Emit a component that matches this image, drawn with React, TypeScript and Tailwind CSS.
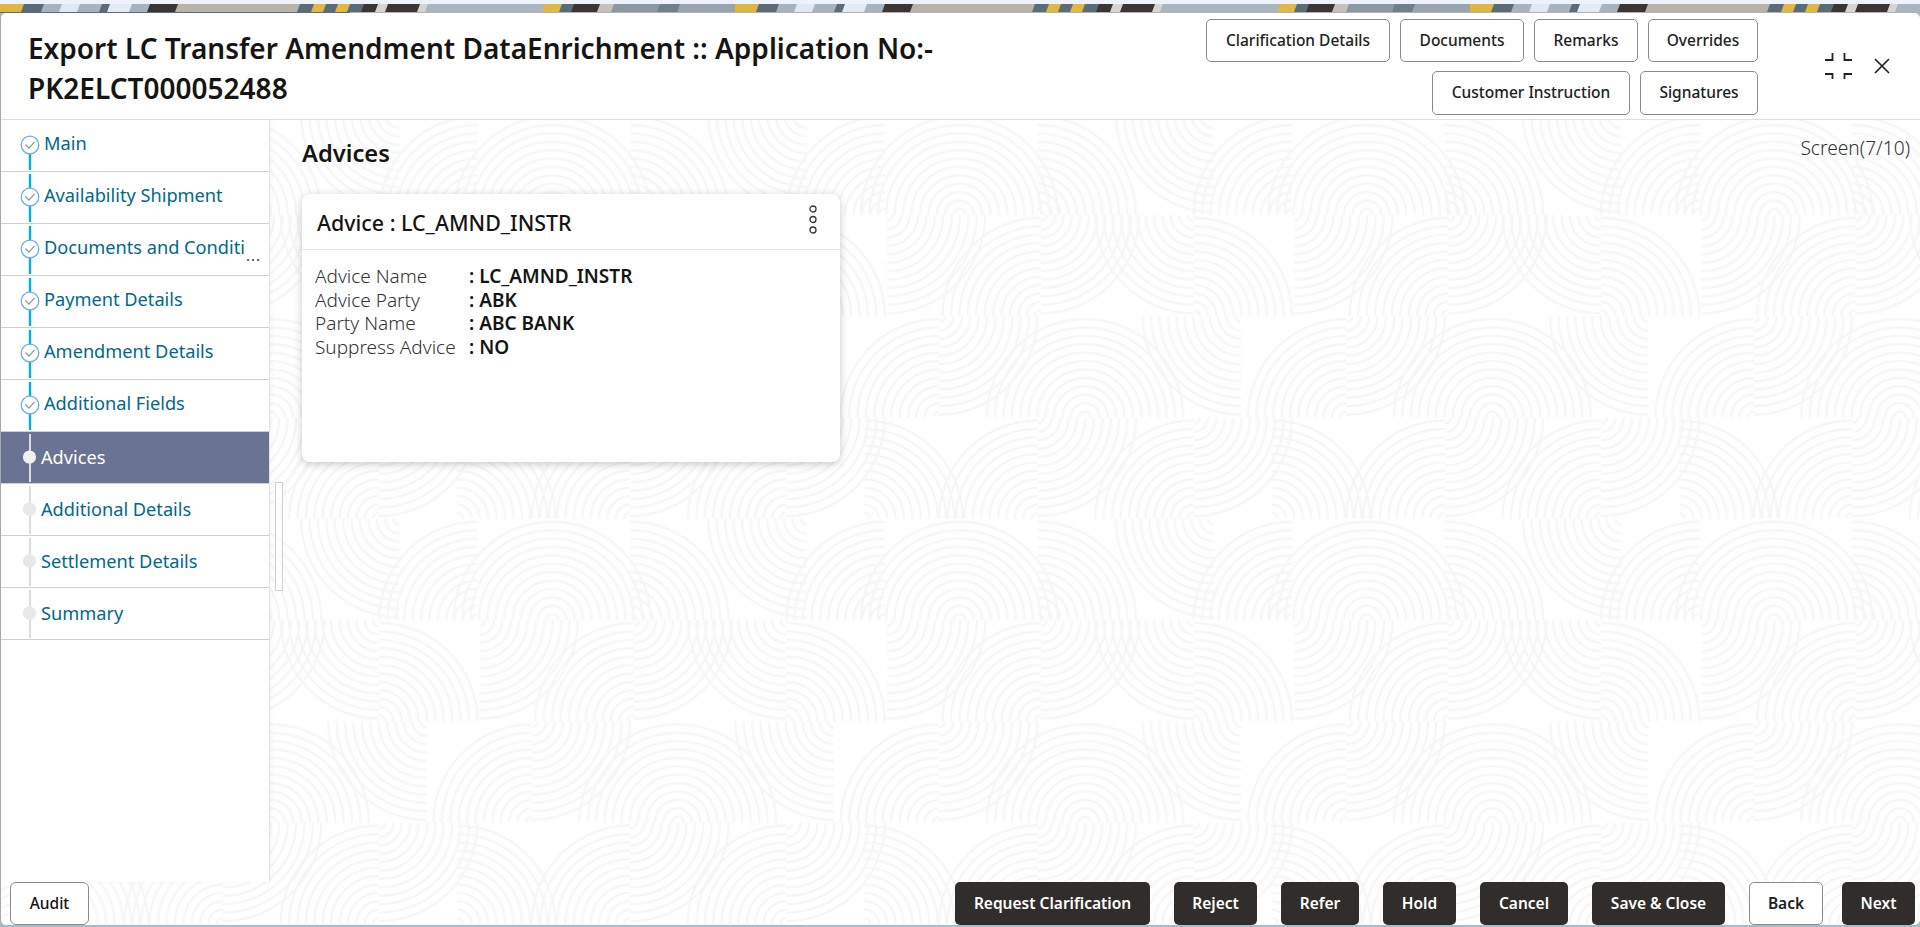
const fontClass = "font-['Noto_Sans','Open_Sans',sans-serif]";

const Z = 1.473;
const TILE_W = 407.3;
const ROW_H = 101.3;

type Quarter = { cx: number; top: boolean; right: boolean };

// four rows of quarter-circle fans, x values read off the reference
const rows: Quarter[][] = [
  [
    { cx: 145, top: false, right: false },
    { cx: 145, top: false, right: true },
    { cx: 260, top: false, right: true },
    { cx: 520, top: true, right: false },
    { cx: 635, top: false, right: false },
  ],
  [
    { cx: 38, top: true, right: true },
    { cx: 265, top: false, right: false },
    { cx: 265, top: true, right: true },
    { cx: 490, top: true, right: false },
    { cx: 490, top: false, right: true },
  ],
  [
    { cx: 115, top: false, right: false },
    { cx: 115, top: true, right: true },
    { cx: 330, top: false, right: false },
    { cx: 330, top: false, right: true },
    { cx: 560, top: true, right: false },
  ],
  [
    { cx: 5, top: false, right: true },
    { cx: 260, top: false, right: false },
    { cx: 260, top: true, right: true },
    { cx: 490, top: false, right: false },
    { cx: 490, top: true, right: true },
  ],
];

const radii = Array.from({ length: 12 }, (_, i) => 6 + i * 8.4);

function quarterPaths(q: Quarter, rowIndex: number) {
  const x = q.cx / Z;
  const y = rowIndex * ROW_H + (q.top ? 0 : ROW_H);
  const dx = q.right ? 1 : -1;
  const dy = q.top ? 1 : -1;
  return radii.map((r) => {
    const sweep = dx * dy > 0 ? 1 : 0;
    return `M${x + dx * r} ${y}A${r} ${r} 0 0 ${sweep} ${x} ${y + dy * r}`;
  });
}

const allPaths = rows.flatMap((row, i) =>
  row.flatMap((q) =>
    [0, -TILE_W, TILE_W].flatMap((shift) =>
      quarterPaths({ ...q, cx: q.cx + shift * Z }, i),
    ),
  ),
);

function FingerprintBackground() {
  return (
    <svg className="absolute inset-0 h-full w-full" aria-hidden="true">
      <defs>
        <pattern
          id="prints"
          width={TILE_W}
          height={ROW_H * 4}
          patternUnits="userSpaceOnUse"
          patternTransform="translate(860 -6.4)"
        >
          <path d={allPaths.join("")} fill="none" stroke="#f6f6f6" strokeWidth="2.2" />
        </pattern>
      </defs>
      <rect width="100%" height="100%" fill="url(#prints)" />
    </svg>
  );
}

const bandBlocks: [number, number, string][] = [
  [0, 24, "#dfb740"],
  [24, 44, "#5a6c78"],
  [44, 62, "#a9b3bd"],
  [62, 80, "#dfe8f4"],
  [80, 102, "#a9b3bd"],
  [102, 110, "#5a6c78"],
  [110, 132, "#e3ebf5"],
  [132, 150, "#a9b3bd"],
  [150, 178, "#3b3633"],
  [178, 300, "#b9b3ab"],
  [300, 314, "#5a6c78"],
  [314, 326, "#e0b844"],
  [326, 338, "#5a6c78"],
  [338, 350, "#e0b844"],
  [350, 364, "#5a6c78"],
  [364, 378, "#3b3633"],
  [378, 388, "#d8d4cf"],
  [388, 420, "#3b3633"],
  [420, 428, "#d8d4cf"],
  [428, 545, "#a9b5c1"],
  [545, 562, "#e0b844"],
  [562, 574, "#5a6c78"],
  [574, 600, "#3b3633"],
  [600, 614, "#c6c1b9"],
  [614, 660, "#8a98a4"],
  [660, 680, "#6f7f8b"],
  [680, 735, "#98a5b0"],
];

function TopBand() {
  return (
    <svg className="block h-[8px] w-full" aria-hidden="true">
      <defs>
        <pattern id="band" width="735" height="8" patternUnits="userSpaceOnUse">
          {bandBlocks.map(([a, b, c]) => (
            <polygon key={a} points={`${a},0 ${b + 3},0 ${b},8 ${a - 3},8`} fill={c} />
          ))}
        </pattern>
      </defs>
      <rect width="100%" height="8" fill="url(#band)" />
    </svg>
  );
}

function OutlineButton({ label, width, height }: { label: string; width: string; height: string }) {
  return (
    <button
      className={`${width} ${height} rounded-[5px] border border-[#8a8a88] bg-white text-[15.5px] font-medium text-[#222]`}
    >
      {label}
    </button>
  );
}

function DarkButton({ label, width }: { label: string; width: string }) {
  return (
    <button
      className={`${width} h-[43px] rounded-[5px] bg-[#312d2a] text-[15.5px] font-semibold text-white`}
    >
      {label}
    </button>
  );
}

type StepState = "done" | "active" | "pending";

const steps: { label: string; state: StepState; overflow?: boolean }[] = [
  { label: "Main", state: "done" },
  { label: "Availability Shipment", state: "done" },
  { label: "Documents and Conditi", state: "done", overflow: true },
  { label: "Payment Details", state: "done" },
  { label: "Amendment Details", state: "done" },
  { label: "Additional Fields", state: "done" },
  { label: "Advices", state: "active" },
  { label: "Additional Details", state: "pending" },
  { label: "Settlement Details", state: "pending" },
  { label: "Summary", state: "pending" },
];

function StepMarker({ state, first }: { state: StepState; first: boolean }) {
  if (state === "done") {
    return (
      <svg width="20" height="52" viewBox="0 0 20 52" className="shrink-0">
        {!first && <line x1="10" y1="2" x2="10" y2="18" stroke="#00aee6" strokeWidth="2.4" />}
        <line x1="10" y1="34" x2="10" y2="50" stroke="#00aee6" strokeWidth="2.4" />
        <circle cx="10" cy="25" r="8.8" fill="white" stroke="#6aaeea" strokeWidth="1.3" />
        <path d="M5.5 24.5l3.4 3.6 5.8-6.2" fill="none" stroke="#7d99ab" strokeWidth="1.2" />
      </svg>
    );
  }
  return (
    <svg width="20" height="52" viewBox="0 0 20 52" className="shrink-0">
      <line x1="10" y1="2" x2="10" y2="50" stroke="#dcdcdc" strokeWidth="2" />
      <circle cx="9.5" cy="25" r="6.6" fill={state === "active" ? "#f0f0f0" : "#e8e8e8"} />
    </svg>
  );
}

function SideNav() {
  return (
    <nav className="w-[269px] shrink-0 border-r border-[#e4e4e4] bg-white shadow-[2px_0_4px_rgba(0,0,0,0.03)]">
      {steps.map((step, i) => {
        const done = step.state === "done";
        const active = step.state === "active";
        return (
          <div
            key={step.label}
            className={`flex h-[52px] items-start border-b border-[#cfcfcf] pl-[19px] text-[18.2px] ${
              active ? "bg-[#6b7394] text-white" : "text-[#00688c]"
            }`}
          >
            <StepMarker state={step.state} first={i === 0} />
            <span
              className={`whitespace-nowrap leading-[24px] ${
                done ? "ml-[4px] mt-[11px]" : "ml-[1px] mt-[13px]"
              }`}
            >
              {step.label}
            </span>
            {step.overflow && (
              <span className="ml-[1px] mt-[19px] text-[15px] leading-[24px] tracking-[1px] text-[#333]">
                ...
              </span>
            )}
          </div>
        );
      })}
    </nav>
  );
}

const adviceRows = [
  { label: "Advice Name", value: ": LC_AMND_INSTR" },
  { label: "Advice Party", value: ": ABK" },
  { label: "Party Name", value: ": ABC BANK" },
  { label: "Suppress Advice", value: ": NO" },
];

function AdviceCard() {
  return (
    <div className="mt-[25px] h-[268px] w-[538px] rounded-[8px] bg-white shadow-[0_2px_8px_rgba(0,0,0,0.22)]">
      <div className="flex h-[56px] items-start justify-between border-b border-[#e2e2e2] pl-[15px] pr-[22px]">
        <span className="mt-[16px] text-[21.4px] font-medium leading-[26px] text-[#161513]">
          Advice : LC_AMND_INSTR
        </span>
        <svg width="10" height="32" viewBox="0 0 10 32" className="mt-[10px]" aria-hidden="true">
          <circle cx="5" cy="5" r="3" fill="none" stroke="#333" strokeWidth="1.3" />
          <circle cx="5" cy="15.5" r="3" fill="none" stroke="#333" strokeWidth="1.3" />
          <circle cx="5" cy="26" r="3" fill="none" stroke="#333" strokeWidth="1.3" />
        </svg>
      </div>
      <div className="pl-[13px] pt-[15px] text-[19px] leading-[23.6px]">
        {adviceRows.map((row) => (
          <div key={row.label} className="flex">
            <span className="w-[154px] shrink-0 font-light text-[#333]">{row.label}</span>
            <span className="font-semibold text-[#161513]">{row.value}</span>
          </div>
        ))}
      </div>
    </div>
  );
}

export default function App() {
  return (
    <div className={`${fontClass} flex h-[927px] w-[1920px] flex-col overflow-hidden bg-[#eef3fb]`}>
      <div className="h-[4px] shrink-0" />
      <TopBand />
      <div className="flex h-[1px] shrink-0">
        <div className="w-[350px] bg-[#5b6a8c]" />
        <div className="flex-1 bg-[#b4b4b4]" />
      </div>
      <div className="flex min-h-0 flex-1 flex-col bg-[#a8bcc4] pb-[2px]">
        <div className="flex min-h-0 flex-1 flex-col overflow-hidden rounded-[6px] border-l border-l-[#a8a8a8] bg-white">
          <header className="flex h-[107px] shrink-0 border-b border-[#e0e0e0] bg-white">
            <h1 className="ml-[27px] mt-[15px] w-[960px] text-[28px] font-semibold leading-[40px] text-[#161513]">
              Export LC Transfer Amendment DataEnrichment :: Application No:- PK2ELCT000052488
            </h1>
            <div className="ml-[218px] mt-[6px] flex w-[552px] flex-col items-end gap-[9px]">
              <div className="flex gap-[10px]">
                <OutlineButton label="Clarification Details" width="w-[184px]" height="h-[43px]" />
                <OutlineButton label="Documents" width="w-[124px]" height="h-[43px]" />
                <OutlineButton label="Remarks" width="w-[104px]" height="h-[43px]" />
                <OutlineButton label="Overrides" width="w-[110px]" height="h-[43px]" />
              </div>
              <div className="flex gap-[10px]">
                <OutlineButton label="Customer Instruction" width="w-[198px]" height="h-[44px]" />
                <OutlineButton label="Signatures" width="w-[118px]" height="h-[44px]" />
              </div>
            </div>
            <svg width="27" height="26" viewBox="0 0 27 26" className="ml-[67px] mt-[40px]" aria-hidden="true">
              <path
                d="M0 7h7.5V0M19.5 0v7H27M0 21h7.5v5M27 21h-7.5v5"
                fill="none"
                stroke="#222"
                strokeWidth="1.8"
              />
            </svg>
            <svg width="16" height="16" viewBox="0 0 16 16" className="ml-[22px] mt-[45px]" aria-hidden="true">
              <path d="M1 1l14 14M15 1L1 15" fill="none" stroke="#222" strokeWidth="1.7" />
            </svg>
          </header>

          <div className="relative flex min-h-0 flex-1 flex-col bg-white">
            <FingerprintBackground />
            <div className="relative flex min-h-0 flex-1">
              <SideNav />
              <main className="relative flex-1 pl-[32px] pr-[10px]">
                <div className="absolute left-[5px] top-[362px] h-[109px] w-[8px] border border-[#cfcfcf] bg-white/60" />
                <div className="flex items-start justify-between">
                  <h2 className="mt-[17px] text-[23.7px] font-semibold leading-[32px] text-[#161513]">
                    Advices
                  </h2>
                  <span className="mt-[15px] text-[19.2px] font-light leading-[26px] text-[#333]">
                    Screen(7/10)
                  </span>
                </div>
                <AdviceCard />
              </main>
            </div>
            <footer className="relative flex h-[43px] shrink-0 justify-between pl-[9px] pr-[5px]">
              <button className="h-[43px] w-[79px] rounded-[6px] border border-[#8a8a88] bg-white text-[15.5px] font-medium text-[#161513]">
                Audit
              </button>
              <div className="flex gap-[24px]">
                <DarkButton label="Request Clarification" width="w-[195px]" />
                <DarkButton label="Reject" width="w-[83px]" />
                <DarkButton label="Refer" width="w-[78px]" />
                <DarkButton label="Hold" width="w-[73px]" />
                <DarkButton label="Cancel" width="w-[88px]" />
                <DarkButton label="Save &amp; Close" width="w-[133px]" />
                <button className="h-[43px] w-[74px] rounded-[5px] border border-[#8a8a88] bg-white text-[15.5px] font-semibold text-[#222]">
                  Back
                </button>
                <DarkButton label="Next" width="w-[73px] -ml-[5px]" />
              </div>
            </footer>
          </div>
        </div>
      </div>
    </div>
  );
}
